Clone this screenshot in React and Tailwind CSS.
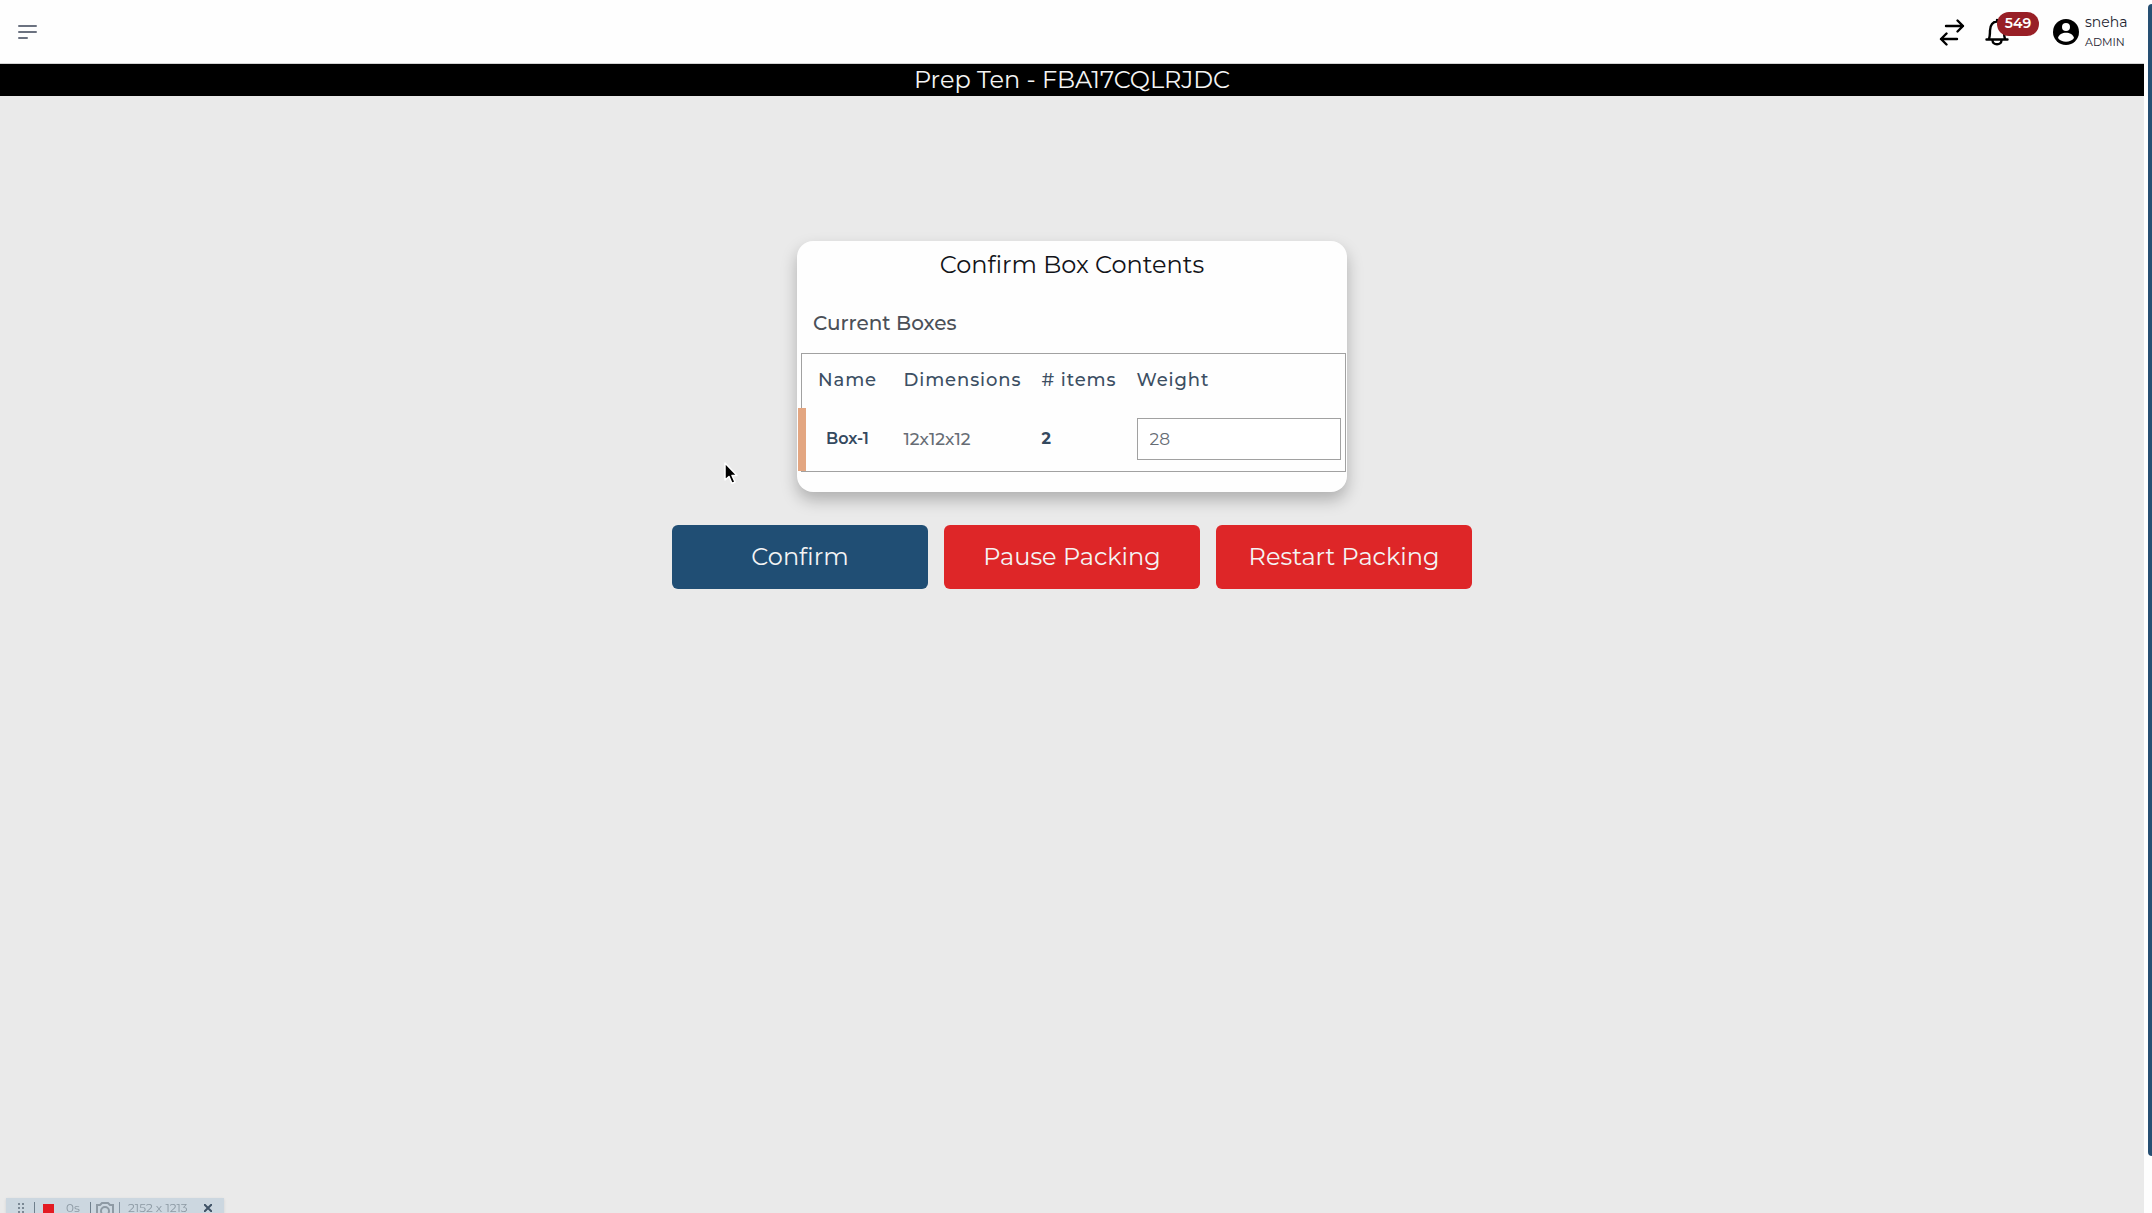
import React from "react";

const boxes = [{ name: "Box-1", dimensions: "12x12x12", items: 2, weight: "28" }];

function MenuIcon() {
  return (
    <svg width="20" height="16" viewBox="0 0 20 16" fill="none" stroke="#6b7280" strokeWidth="2" strokeLinecap="round">
      <path d="M1 2h17M1 8h17M1 14h8" />
    </svg>
  );
}

function SwapIcon() {
  return (
    <svg width="26" height="28" viewBox="0 0 26 28" fill="none" stroke="#000" strokeWidth="2.4" strokeLinecap="round" strokeLinejoin="round">
      <path d="M7 8h17M18.500 2.500L24 8l-5.500 5.500" />
      <path d="M18 21H2M7.500 15.500L2 21l5.500 5.500" />
    </svg>
  );
}

function BellIcon() {
  return (
    <svg width="24" height="28" viewBox="0 0 24 28" fill="none" stroke="#000" strokeWidth="2.4" strokeLinecap="round" strokeLinejoin="round">
      <path d="M12 3.500V2M1.500 21.500h21M3.500 21.500c1.500-2 1.500-4 1.500-9C5 7 8 3.500 12 3.500S19 7 19 12.500c0 5 0 7 1.500 9" />
      <path d="M7.500 22.500c.5 5 8.500 5 9 0" />
    </svg>
  );
}

function UserIcon() {
  return (
    <svg width="26" height="26" viewBox="0 0 26 26">
      <circle cx="13" cy="13" r="13" fill="#000" />
      <circle cx="13" cy="8" r="4" fill="#fff" />
      <path d="M5 19c1.500-7 14.500-7 16 0-3.500 5-12.500 5-16 0z" fill="#fff" />
    </svg>
  );
}

function Header() {
  return (
    <header className="flex h-16 items-center justify-between border-b border-neutral-300 bg-[#fefefe] pl-[18px] pr-[15px]">
      <button type="button" aria-label="Toggle menu">
        <MenuIcon />
      </button>
      <div className="flex items-center">
        <button type="button" aria-label="Switch account" className="mr-5">
          <SwapIcon />
        </button>
        <button type="button" aria-label="Notifications" className="relative mr-11">
          <BellIcon />
          <span className="absolute left-3 -top-1.5 flex h-6 w-[42px] items-center justify-center rounded-full bg-[#981f26] text-[14px] font-semibold text-white">
            549
          </span>
        </button>
        <button type="button" className="flex items-center gap-1.5 text-left">
          <UserIcon />
          <span className="flex w-[44px] flex-col text-[#1d2430]">
            <span className="text-[14px] leading-5">sneha</span>
            <span className="text-[11px] leading-5">ADMIN</span>
          </span>
        </button>
      </div>
    </header>
  );
}

function BoxTable() {
  return (
    <table className="ml-1 w-[545px] table-fixed border-collapse border border-neutral-400 text-left">
      <colgroup>
        <col className="w-[90px]" />
        <col className="w-[138px]" />
        <col className="w-[95px]" />
        <col />
      </colgroup>
      <thead>
        <tr className="h-[54px] text-[18px] tracking-wider text-[#3c4f63]">
          <th className="pl-4 font-medium">Name</th>
          <th className="pl-3 font-medium">Dimensions</th>
          <th className="whitespace-nowrap pl-3 font-medium"># items</th>
          <th className="pl-3 font-medium">Weight</th>
        </tr>
      </thead>
      <tbody>
        {boxes.map((box) => (
          <tr key={box.name} className="h-16 text-[16px] text-[#666c74]">
            <td className="relative pl-6 font-semibold text-[#34495e]">
              <span className="absolute inset-y-0 -left-1 w-2 bg-[#e3a681]" />
              {box.name}
            </td>
            <td className="pl-3 text-[17px] font-medium">{box.dimensions}</td>
            <td className="pl-3 font-bold text-[#34495e]">{box.items}</td>
            <td className="pl-3 pr-1">
              <input
                type="text"
                aria-label={`Weight of ${box.name}`}
                defaultValue={box.weight}
                className="block h-[42px] w-full border border-neutral-400 bg-white px-3 text-[17px] text-[#666c74] outline-none"
              />
            </td>
          </tr>
        ))}
      </tbody>
    </table>
  );
}

function ActionButton({ className, children }) {
  return (
    <button type="button" className={`h-16 w-64 rounded-md text-[24px] text-[#f4f4f4] ${className}`}>
      {children}
    </button>
  );
}

function RecorderBar() {
  return (
    <div className="fixed bottom-0 left-1.5 flex h-[15px] w-[218px] items-start overflow-hidden bg-[#ccd7e0] pt-1 text-[12px] leading-4 text-[#8b98a2] shadow">
      <svg className="ml-3 mt-px shrink-0" width="8" height="14" viewBox="0 0 8 14" fill="#7b8894">
        <path d="M0 0h2v2H0zM4 0h2v2H4zM0 4h2v2H0zM4 4h2v2H4zM0 8h2v2H0zM4 8h2v2H4z" />
      </svg>
      <span className="ml-2 h-4 w-px shrink-0 bg-[#6f7f8c]" />
      <span className="ml-2 mt-0.5 h-3 w-[11px] shrink-0 bg-[#e31b23]" />
      <span className="ml-3 w-4 leading-3">0s</span>
      <span className="ml-2 h-4 w-px shrink-0 bg-[#6f7f8c]" />
      <svg className="ml-1 shrink-0" width="20" height="18" viewBox="0 0 20 18" fill="none" stroke="#8e9aa4" strokeWidth="2">
        <path d="M5 3l2-2h6l2 2h3v13H2V3z" />
        <circle cx="10" cy="9" r="4" />
      </svg>
      <span className="ml-1 h-4 w-px shrink-0 bg-[#8796a3]" />
      <span className="ml-2 whitespace-nowrap leading-3">2152 x 1213</span>
      <button type="button" aria-label="Close recorder" className="ml-auto mr-3 mt-0.5">
        <svg width="8" height="8" viewBox="0 0 8 8" stroke="#3f5266" strokeWidth="2">
          <path d="M0 0l8 8M8 0L0 8" />
        </svg>
      </button>
    </div>
  );
}

function Pointer() {
  return (
    <svg className="pointer-events-none fixed left-[723px] top-[461px]" width="16" height="26" viewBox="0 0 16 26">
      <path d="M2 2v17l4-3.500 3 7 3-1.500-3-6.500h5z" fill="#000" stroke="#fff" strokeWidth="1.500" strokeLinejoin="round" />
    </svg>
  );
}

export default function App() {
  return (
    <div className="flex min-h-screen bg-[#fefefe] font-['Montserrat','Inter',sans-serif]">
      <div className="flex min-w-0 flex-1 flex-col bg-[#eaeaea]">
        <Header />
        <h1 className="h-8 bg-black text-center text-[24px] leading-8 text-[#f4f4f4]">Prep Ten - FBA17CQLRJDC</h1>
        <main className="flex flex-col items-center pt-[145px]">
          <section className="w-[550px] rounded-2xl bg-[#fefefe] pb-5 shadow-[0_8px_16px_rgba(0,0,0,0.25)]">
            <h2 className="pt-1 text-center text-[24px] leading-10 text-[#111318]">Confirm Box Contents</h2>
            <h3 className="mb-3 mt-5 pl-4 text-[20px] font-medium leading-9 text-[#4b5058]">Current Boxes</h3>
            <BoxTable />
          </section>
          <div className="mt-[33px] flex gap-4">
            <ActionButton className="bg-[#204e74]">Confirm</ActionButton>
            <ActionButton className="bg-[#de2628]">Pause Packing</ActionButton>
            <ActionButton className="bg-[#de2628]">Restart Packing</ActionButton>
          </div>
        </main>
      </div>
      <div className="flex w-2 justify-end pt-1">
        <div className="h-[95vh] w-1 rounded-l bg-[#264f73]" />
      </div>
      <Pointer />
      <RecorderBar />
    </div>
  );
}
